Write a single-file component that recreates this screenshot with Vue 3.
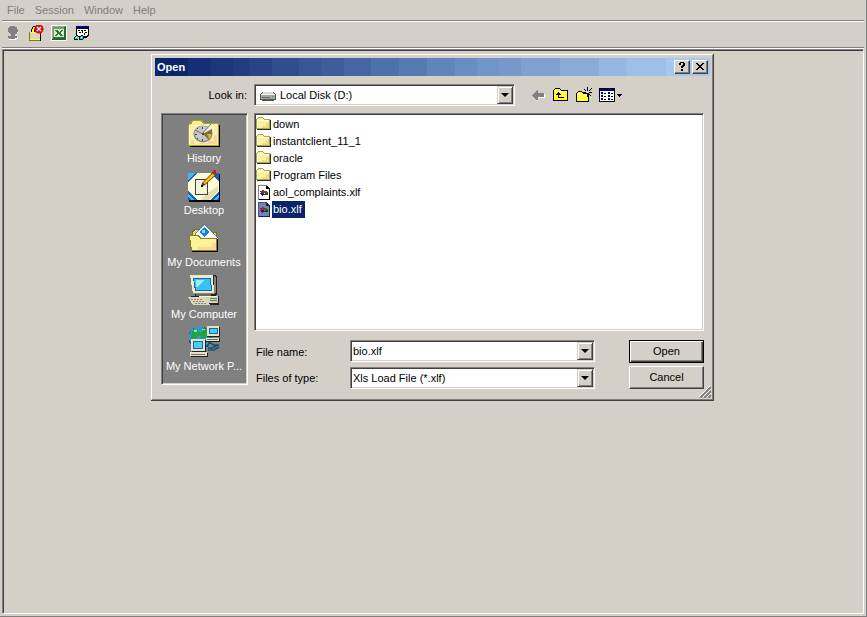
<script setup>
import { ref } from 'vue'

const menus = ['File', 'Session', 'Window', 'Help']
const places = [
  { id: 'history', label: 'History' },
  { id: 'desktop', label: 'Desktop' },
  { id: 'documents', label: 'My Documents' },
  { id: 'computer', label: 'My Computer' },
  { id: 'network', label: 'My Network P...' },
]
const files = [
  { name: 'down', kind: 'folder' },
  { name: 'instantclient_11_1', kind: 'folder' },
  { name: 'oracle', kind: 'folder' },
  { name: 'Program Files', kind: 'folder' },
  { name: 'aol_complaints.xlf', kind: 'file' },
  { name: 'bio.xlf', kind: 'file' },
]
const fileName = ref('bio.xlf')
const selected = ref('bio.xlf')

function pick(file) {
  selected.value = file.name
  if (file.kind === 'file') fileName.value = file.name
}
</script>

<template>
  <div class="app">
    <nav class="menubar" aria-label="Main menu">
      <button v-for="m in menus" :key="m" type="button" disabled>{{ m }}</button>
    </nav>

    <div class="toolbar" role="toolbar" aria-label="Main toolbar">
      <button type="button" aria-label="User" disabled>
        <svg width="16" height="16" viewBox="0 0 16 16" shape-rendering="crispEdges">
          <path fill="#fff" d="M10 2h2v1h1v5h-1v2h-1v2h2v2h-2v1H4v-1h6v-3h1z" />
          <path fill="#808080" d="M5 1h5v1h2v2h1v3h-1v2h-2v2h2v2h-2v1H4v-1H3v-2h3V9H5V8H4V7H3V3h1V2h1z" />
        </svg>
      </button>
      <button type="button" aria-label="Disconnect">
        <svg width="16" height="16" viewBox="0 0 16 16" shape-rendering="crispEdges">
          <path fill="#000" d="M4 2h1V1h4v1H5v2H4v3H3V4h1zM6 4h1v3H6z" />
          <path fill="#ffff00" d="M5 2h3v1H6v4H4V4h1z" />
          <path fill="#808000" d="M1 7h1v9H1zM2 15h10v1H2z" />
          <path fill="#000" d="M12 8h1v8h-1z" />
          <path fill="#ffff40" d="M2 7h10v1H2zM2 14h10v1H2z" />
          <path fill="#d8d4c0" d="M2 8h10v6H2z" />
          <circle cx="11" cy="4" r="4.600" fill="#e00810" shape-rendering="auto" />
          <path d="M9 2l4 4M13 2L9 6" stroke="#fff" stroke-width="1.400" shape-rendering="auto" />
        </svg>
      </button>
      <button type="button" aria-label="Excel">
        <svg width="16" height="16" viewBox="0 0 16 16" shape-rendering="crispEdges">
          <path fill="#fff" d="M0 0h16v16H0z" />
          <path fill="#8db18a" d="M1 1h13v13H1z" />
          <path fill="#1f5f22" d="M14 1h1v14H1v-1h13z" />
          <path fill="#6c9f6b" d="M2 2h12v12H2z" />
          <path fill="#2b702e" d="M2 12h12v2H2zM13 2h1v12h-1z" />
          <path fill="#dbe9d6" d="M3 4h10v8H3z" />
          <path fill="#2c7c33" d="M4 5h3v1h1v1h1V6h1V5h2v1h-1v1h-1v2h1v1h1v1H9v-1H8V9H7v1H6v1H4v-1h1V9h1V7H5V6H4z" />
        </svg>
      </button>
      <button type="button" aria-label="Find records">
        <svg width="16" height="16" viewBox="0 0 16 16" shape-rendering="crispEdges">
          <path fill="#000" d="M2 1h13v10h-1v1h-1v1H5v-1H2z" />
          <path fill="#fff" d="M3 4h11v6h-1v1H3z" />
          <path fill="#000080" d="M2 1h13v2H2z" />
          <path fill="#000" d="M4 5h2v1H4zM7 5h2v1H7zM10 5h2v1h-2zM5 7h2v1H5zM8 6h1v2H8zM11 7h2v1h-2zM10 8h1v2h-1zM2 10h2v1H2zM7 10h2v1H7zM1 11h1v2H1zM0 12h1v3H0zM1 14h3v1H1zM4 11h2v1H4zM5 12h1v3H5zM6 14h3v1H6zM9 11h1v3H9z" />
          <path fill="#00dfe8" d="M1 12h3v2H1zM6 12h3v2H6zM2 11h2v1H2zM7 11h2v1H7z" />
          <path fill="#fff" d="M2 12h1v1H2zM7 12h1v1H7z" />
        </svg>
      </button>
    </div>

    <main class="workspace">
      <section class="dialog" role="dialog" aria-labelledby="dlg-title">
        <header class="titlebar">
          <h1 id="dlg-title">Open</h1>
          <button type="button" aria-label="Help">
            <svg width="12" height="10" viewBox="0 0 12 10" shape-rendering="crispEdges">
              <path d="M3 1h1V0h4v1h1v3H8v1H7v1H5V4h1V3h1V1H5v2H3zM5 7h2v2H5z" />
            </svg>
          </button>
          <button type="button" aria-label="Close">
            <svg width="12" height="10" viewBox="0 0 12 10" shape-rendering="crispEdges">
              <path d="M2 1h2v1h1v1h2V2h1V1h2v1H9v1H8v1H7v1h1v1h1v1h1v1H8V7H7V6H5v1H4v1H2V7h1V6h1V5h1V4H4V3H3V2H2z" />
            </svg>
          </button>
        </header>

        <form class="body" @submit.prevent>
          <label class="lookin-label" for="look-in">Look in:</label>
          <div class="lookin-row">
            <div class="combo lookin">
              <svg class="lead" width="16" height="16" viewBox="0 0 16 16" shape-rendering="crispEdges">
                <path fill="#555" d="M2 5h12v1h1v1h1v6h-2v1H2v-1H0V7h1V6h1z" />
                <path fill="#d8d8d8" d="M3 5h10v1h1v1H2V6h1z" />
                <path fill="#a4a4a4" d="M1 7h14v5H1z" />
                <path fill="#eee" d="M1 7h14v1H1z" />
                <path fill="#6b6b6b" d="M2 10h8v1H2z" />
                <path fill="#35c43a" d="M12 9h2v1h-2z" />
              </svg>
              <select id="look-in"><option>Local Disk (D:)</option></select>
              <span class="drop" aria-hidden="true"><i></i></span>
            </div>
            <div class="navtools">
              <button type="button" aria-label="Back" disabled>
                <svg width="16" height="16" viewBox="0 0 16 16" shape-rendering="crispEdges">
                  <path fill="#fff" d="M7 4h1v3h7v4H8v3H7v-1z" />
                  <path fill="#808080" d="M2 8h1V7h1V6h1V5h1V4h1v-1h1v3h6v4H8v3H6v-1H5v-1H4v-1H3V9H2z" />
                </svg>
              </button>
              <button type="button" aria-label="Up one level">
                <svg width="16" height="16" viewBox="0 0 16 16" shape-rendering="crispEdges">
                  <path fill="#000" d="M2 1h5v1h1v1h7v11H0V3h1V2h1z" />
                  <path fill="#ffff31" d="M2 2h5v1h1v1h6v9H1V3h1z" />
                  <path fill="#ffffb0" d="M1 4h13v1H1z" />
                  <path fill="#000" d="M5 5h1v1h1v1h1v1H6v2h5v1H5V8H3V7h1V6h1z" />
                </svg>
              </button>
              <button type="button" aria-label="New folder">
                <svg width="16" height="16" viewBox="0 0 16 16" shape-rendering="crispEdges">
                  <path fill="#000" d="M2 4h4v1h1v1h6v9H0V6h1V5h1z" />
                  <path fill="#ffff31" d="M2 5h4v1h1v1h5v7H1V6h1z" />
                  <path fill="#ffffb0" d="M1 7h11v1H1z" />
                  <path fill="#000" d="M11 0h1v4h-1zM11 7h1v3h-1zM13 5h3v1h-3zM7 5h3v1H7zM8 2h1v1H8zM9 3h1v1H9zM14 2h1v1h-1zM13 3h1v1h-1zM15 1h1v1h-1zM13 7h1v1h-1zM14 8h1v1h-1z" />
                  <path fill="#fff" d="M11 5h1v1h-1z" />
                </svg>
              </button>
              <button type="button" aria-label="Views">
                <svg width="23" height="16" viewBox="0 0 23 16" shape-rendering="crispEdges">
                  <path fill="#000" d="M0 1h16v14H0z" />
                  <path fill="#000080" d="M1 2h14v2H1z" />
                  <path fill="#fff" d="M1 4h14v10H1z" />
                  <path fill="#000080" d="M2 5h2v2H2zM2 8h2v2H2zM2 11h2v2H2zM9 5h2v2H9zM9 8h2v2H9zM9 11h2v2H9z" />
                  <path fill="#000" d="M5 6h2v1H5zM5 9h2v1H5zM5 12h2v1H5zM12 6h2v1h-2zM12 9h2v1h-2zM12 12h2v1h-2zM18 7h5v1h-1v1h-1v1h-1V9h-1V8h-1z" />
                </svg>
              </button>
            </div>
          </div>

          <nav class="places" aria-label="Places">
            <button v-for="p in places" :key="p.id" type="button">
              <svg v-if="p.id === 'history'" width="32" height="32" viewBox="0 0 32 32" shape-rendering="crispEdges">
                <path fill="#000" d="M2 7h30v22H2z" />
                <path fill="#a8a230" d="M0 7h1V5h2V3l1-1h10l2 3h15v22l-1 1H0z" />
                <path fill="#f6f28e" d="M1 7h1V6h2V4l1-1h8l2 3h15v21H1z" />
                <path fill="#fbf0b4" d="M2 9h27v17H2z" />
                <path fill="#fbd2a0" d="M20 23h9v3H12v-1h8zM26 17h3v6h-3zM3 22h3v4H3z" />
                <path fill="#fffde0" d="M1 7h28v1H1zM1 8h1v18H1z" />
                <g shape-rendering="auto">
                  <ellipse cx="15" cy="16" rx="9.500" ry="8.500" fill="#848484" />
                  <ellipse cx="15" cy="15.500" rx="8.500" ry="7.500" fill="#c6c6c6" />
                  <path fill="#8a6a28" d="M15 16l9-6v7l-3 5z" />
                  <path fill="#d6a850" d="M19 16h5l-1 3-2 2z" />
                  <path fill="#f0f0f0" d="M14 16L23 6l1 5z" />
                  <path stroke="#707070" d="M14 16L23 6M15 16L7 12" fill="none" />
                </g>
                <path fill="#444" d="M14 9h1v2h-1zM14 21h1v2h-1zM7 16h2v1H7zM9 20h1v1H9zM9 10h1v1H9zM14 15h2v2h-2z" />
              </svg>
              <svg v-else-if="p.id === 'desktop'" width="32" height="32" viewBox="0 0 32 32" shape-rendering="crispEdges">
                <path fill="#000" d="M1 4h31v28H1z" />
                <path fill="#1464b8" d="M0 3h31v27H0z" />
                <path fill="#4cb4f4" d="M0 3h7L0 10zM0 24l6 6H3l-3-3zM31 24l-6 6h3l3-3z" />
                <path fill="#fdfbd4" d="M9 3h14l8 9v9l-8 9H9l-9-9v-9z" />
                <path fill="#e4e0b0" d="M21 22l9-6v5l-8 9H12z" />
                <path fill="#404040" d="M7 9h13v16H7z" />
                <path fill="#f4f3dc" d="M8 10h11v14H8z" />
                <g shape-rendering="auto">
                  <path fill="#5a3c00" d="M13 17l1-4L25 2l3 3-11 10z" />
                  <path fill="#ffc21c" d="M15 13L25 3l2 2-10 9z" />
                  <path fill="#ce1820" d="M24 3l2-3h2v3l-2 2z" />
                </g>
                <path fill="#000" d="M13 15h2v2h-2z" />
              </svg>
              <svg v-else-if="p.id === 'documents'" width="32" height="32" viewBox="0 0 32 32" shape-rendering="crispEdges">
                <path fill="#78701c" d="M4 10l2-3h7l2 3h14v20H4z" />
                <path fill="#e8df70" d="M5 10l2-2h5l2 3h14v9H5z" />
                <path fill="#567c9c" d="M7 12l9-10 15 14-2 3H7z" />
                <path fill="#fff" d="M8 12l8-9 14 13-2 2H8z" />
                <path fill="#1c83d2" d="M11 10l5-5 5 5-5 5z" />
                <path fill="#8cdbfa" d="M14 8h3v3h-3z" />
                <path fill="#000" d="M4 28h25V17h1v13H4z" />
                <path fill="#8b821c" d="M1 13h10l2 3h16v13H3z" />
                <path fill="#fbf29a" d="M2 14h8l2 3h16v11H4z" />
                <path fill="#fcd794" d="M10 25h14v-4h4v7H10z" />
              </svg>
              <svg v-else-if="p.id === 'computer'" width="32" height="32" viewBox="0 0 32 32" shape-rendering="crispEdges">
                <path fill="#222" d="M5 1h22l2 2v17l-3 3H7z" />
                <path fill="#efe9cc" d="M2 1h23l1 19H5z" />
                <path fill="#8b8778" d="M26 2l2 2v14l-2 2zM5 19h21v1H5z" />
                <path fill="#116bb4" d="M5 4h18l1 13H7z" />
                <path fill="#35c4f4" d="M6 5h16l1 11H8z" />
                <path fill="#a0ecff" d="M8 6h8l-7 7H8z" />
                <path fill="#6e6a60" d="M8 20h15v2H8z" />
                <path fill="#222" d="M2 24l1-2h28v9H19z" />
                <path fill="#d8d2b8" d="M11 22h19v7H11z" />
                <path fill="#f3efd8" d="M11 22h18v1H11z" />
                <path fill="#77745f" d="M22 24h7v1h-7zM22 26h7v1h-7z" />
                <path fill="#dcd6bd" d="M0 23h17l5 8H5z" />
                <path fill="#8a866c" d="M3 25h2v1H3zM6 25h2v1H6zM9 25h2v1H9zM12 25h2v1h-2zM5 27h2v1H5zM8 27h2v1H8zM11 27h2v1h-2zM14 27h2v1h-2zM7 29h2v1H7zM10 29h2v1h-2zM13 29h2v1h-2zM16 29h2v1h-2z" />
              </svg>
              <svg v-else width="32" height="32" viewBox="0 0 32 32" shape-rendering="crispEdges">
                <circle cx="12" cy="12" r="11.500" fill="#0a5a8e" />
                <circle cx="11.500" cy="11" r="10.500" fill="#2c9ade" />
                <path fill="#23a33c" d="M5 4h4l3 3-2 4-4 3v5l-3-3V8zM14 1l6 3-1 5-4 4 2 5-3 4-3-6 2-5-2-3 4-3z" />
                <path fill="#9be59a" d="M6 4h3v2H6zM14 3h3v1h-3z" />
                <path fill="#222" d="M19 1h13v10H19zM18 12h14v4H18z" />
                <path fill="#e7e1c7" d="M19 0h12v10H19zM18 12h13v3H18z" />
                <path fill="#116bb4" d="M21 2h9v6h-9z" />
                <path fill="#4acbf5" d="M22 3h7v4h-7z" />
                <path fill="#222" d="M4 14h14v12H4zM3 27h17v4H3z" />
                <path fill="#e7e1c7" d="M3 13h14v12H3zM2 26h17v4H2z" />
                <path fill="#116bb4" d="M5 15h10v8H5z" />
                <path fill="#4acbf5" d="M6 16h8v6H6z" />
                <path fill="#77745f" d="M3 28h14v1H3zM19 13h11v1H19z" />
                <path fill="none" stroke="#0b527c" stroke-width="1.500" shape-rendering="auto" d="M20 22h4l6-3M20 24h6l5-3M22 17l4 2h5" />
              </svg>
              <span>{{ p.label }}</span>
            </button>
          </nav>

          <div class="main">
            <ul class="files" role="listbox" aria-label="Files">
              <li
                v-for="f in files"
                :key="f.name"
                role="option"
                :aria-selected="f.name === selected"
                :class="{ selected: f.name === selected }"
                @click="pick(f)"
              >
                <svg v-if="f.kind === 'folder'" width="16" height="16" viewBox="0 0 16 16" shape-rendering="crispEdges">
                  <path fill="#303018" d="M2 3h13v10H1v-1h1z" />
                  <path fill="#a8a650" d="M0 2h1V1h1V0h5v1h1v1h6v10H0z" />
                  <path fill="#f9f2a4" d="M1 2h1V1h5v1h1v1h5v8H1z" />
                  <path fill="#fffcd8" d="M1 3h12v1H1zM1 3h1v7H1z" />
                  <path fill="#eedc84" d="M6 9h4V6h3v5H6z" />
                </svg>
                <svg v-else width="16" height="16" viewBox="0 0 16 16" shape-rendering="crispEdges">
                  <path class="edge" d="M2 0h9v1h1v1h1v1h1v12H2z" />
                  <path class="sheet" d="M3 1h7v3h3v10H3z" />
                  <path class="outline" d="M2 0h9v1H2zM2 0h1v15H2z" />
                  <path fill="#c01818" d="M6 5h2v1h1v2H5V6h1z" />
                  <path fill="#188418" d="M9 6h2v1h1v1H9z" />
                  <path fill="#1818c0" d="M5 8h3v1h1v1H7v1H6v-1H5z" />
                  <path fill="#2c3c20" d="M9 8h3v2H9zM4 6h1v1H4zM4 8h1v1H4z" />
                </svg>
                <span>{{ f.name }}</span>
              </li>
            </ul>

            <div class="fields">
              <label for="file-name">File name:</label>
              <div class="combo name">
                <input id="file-name" v-model="fileName" type="text" />
                <button class="drop" type="button" aria-label="Recent names"><i></i></button>
              </div>
              <button class="push default" type="submit">Open</button>

              <label for="file-type">Files of type:</label>
              <div class="combo type">
                <select id="file-type"><option>Xls Load File (*.xlf)</option></select>
                <span class="drop" aria-hidden="true"><i></i></span>
              </div>
              <button class="push" type="button">Cancel</button>
            </div>
          </div>
        </form>

        <svg class="grip" width="12" height="12" viewBox="0 0 12 12">
          <path d="M1 12L12 1M5 12l7-7M9 12l3-3" stroke="#808080" stroke-width="2" />
          <path d="M0 11L11 0M4 11l8-8M8 11l4-4" stroke="#fff" />
        </svg>
      </section>
    </main>
  </div>
</template>

<style>
body {
  background: #d4d0c8;
}
</style>

<style scoped>
.app {
  box-sizing: border-box;
  min-height: 100vh;
  display: flex;
  flex-direction: column;
  padding: 0 2px 2px;
  border-right: 1px solid #808080;
  border-bottom: 1px solid #808080;
  background: #d4d0c8;
  color: #000;
  font: 11px/13px "Liberation Sans", Arial, sans-serif;
}

.app * {
  box-sizing: border-box;
}

button,
input,
select {
  margin: 0;
  padding: 0;
  border: 0;
  border-radius: 0;
  outline: 0;
  background: transparent;
  color: inherit;
  font: inherit;
  appearance: none;
}

svg {
  display: block;
  flex: none;
}

.menubar {
  display: flex;
  align-items: center;
  gap: 10px;
  height: 20px;
  padding: 0 5px;
}

.menubar button {
  color: #808080;
}

.toolbar {
  display: flex;
  align-items: center;
  gap: 7px;
  height: 28px;
  padding: 0 3px 2px;
  border-top: 1px solid #808080;
  border-bottom: 1px solid #808080;
  box-shadow: inset 0 1px #fff, 0 1px #fff;
}

.workspace {
  flex: 1;
  position: relative;
  margin-top: 1px;
  border: 1px solid;
  border-color: #808080 #fff #fff #808080;
  box-shadow: inset 1px 1px #404040;
}

.dialog {
  position: absolute;
  left: 148px;
  top: 4px;
  width: 563px;
  padding: 3px 2px 2px 3px;
  border: solid;
  border-width: 1px 2px 2px 1px;
  border-color: #fff #808080 #808080 #fff;
  box-shadow: -1px -1px #d4d0c8;
  background: #d4d0c8;
}

.dialog::after {
  content: "";
  position: absolute;
  inset: -1px -2px -2px -1px;
  border-right: 1px solid #404040;
  border-bottom: 1px solid #404040;
  pointer-events: none;
}

.titlebar {
  display: flex;
  align-items: center;
  gap: 2px;
  height: 18px;
  padding: 0 2px;
  background: linear-gradient(
    to right,
    #0c266c 0 6%,
    #142f75 6% 10%,
    #1a377b 10% 14%,
    #203d81 14% 17%,
    #264487 17% 21%,
    #2e4e8e 21% 26%,
    #365795 26% 30%,
    #3c5e9b 30% 34%,
    #4466a2 34% 39%,
    #4d71ab 39% 44%,
    #567bb2 44% 49%,
    #5f85ba 49% 54%,
    #688ec2 54% 58%,
    #7096c8 58% 62%,
    #7799ca 62% 66%,
    #7fa1d0 66% 73%,
    #8aacd9 73% 80%,
    #94b8e1 80% 85%,
    #9bbfe7 85% 92%,
    #a4c8ee 92%
  );
}

.titlebar h1 {
  flex: 1;
  margin: 0;
  color: #fff;
  font-size: 11px;
  font-weight: bold;
}

.titlebar button {
  display: grid;
  place-items: center;
  width: 16px;
  height: 14px;
  background: #d4d0c8;
  border: 1px solid;
  border-color: #fff #404040 #404040 #fff;
  box-shadow: inset -1px -1px #808080;
}

.body {
  display: grid;
  grid-template-columns: 87px 1fr;
  column-gap: 6px;
  row-gap: 7px;
  padding: 8px 6px;
}

.lookin-label {
  align-self: center;
  padding-right: 1px;
  text-align: right;
}

.lookin-row,
.navtools {
  display: flex;
  align-items: center;
}

.lookin-row {
  gap: 15px;
}

.navtools {
  gap: 7px;
}

.combo {
  display: grid;
  grid-template-columns: auto 1fr 16px;
  align-items: center;
  height: 22px;
  padding: 1px;
  background: #fff;
  border: 1px solid;
  border-color: #808080 #fff #fff #808080;
  box-shadow: inset 1px 1px #404040, inset -1px -1px #d4d0c8;
}

.combo input,
.combo select {
  grid-row: 1;
  grid-column: 1 / 4;
  width: 100%;
  height: 18px;
  padding-left: 1px;
}

.lookin {
  width: 261px;
}

.lookin .lead {
  grid-row: 1;
  grid-column: 1;
  margin-left: 4px;
  pointer-events: none;
}

.lookin select {
  padding-left: 24px;
}

.drop {
  grid-row: 1;
  grid-column: 3;
  display: grid;
  place-items: center;
  height: 18px;
  background: #d4d0c8;
  border: 1px solid;
  border-color: #d4d0c8 #404040 #404040 #d4d0c8;
  box-shadow: inset 1px 1px #fff, inset -1px -1px #808080;
  pointer-events: none;
}

.drop i {
  border: 4px solid transparent;
  border-top-color: #000;
  border-bottom-width: 0;
}

.places {
  align-self: start;
  display: flex;
  flex-direction: column;
  height: 272px;
  padding: 4px 1px 0 0;
  background: #808080;
  border: 1px solid;
  border-color: #808080 #fff #fff #808080;
  box-shadow: inset 1px 1px #404040, inset -1px -1px #d4d0c8;
}

.places button {
  display: flex;
  flex-direction: column;
  align-items: center;
  gap: 2px;
  height: 52px;
  color: #fff;
  white-space: nowrap;
}

.main {
  display: flex;
  flex-direction: column;
  gap: 9px;
}

.files {
  height: 218px;
  margin: 0;
  padding: 2px 1px;
  list-style: none;
  background: #fff;
  border: 1px solid;
  border-color: #808080 #fff #fff #808080;
  box-shadow: inset 1px 1px #404040, inset -1px -1px #d4d0c8;
}

.files li {
  display: flex;
  align-items: center;
  height: 17px;
}

.files span {
  padding: 2px 3px 2px 1px;
}

.files .selected span {
  background: #0a246a;
  color: #fff;
}

.edge {
  fill: #000;
}

.sheet {
  fill: #fff;
}

.outline {
  fill: #808080;
}

.selected .sheet {
  fill: #7484ad;
}

.selected .edge {
  fill: #0a246a;
}

.selected .outline {
  fill: #40558c;
}

.fields {
  display: grid;
  grid-template-columns: 96px 245px 1fr 75px;
  grid-auto-rows: 23px;
  row-gap: 3px;
  align-items: center;
}

.fields label {
  padding: 2px 0 0 2px;
}

.name {
  align-self: start;
}

.type {
  align-self: end;
}

.push {
  grid-column: 4;
  height: 23px;
  background: #d4d0c8;
  border: 1px solid;
  border-color: #fff #404040 #404040 #fff;
  box-shadow: inset -1px -1px #808080;
}

.push.default {
  border-color: #000;
  box-shadow: inset 1px 1px #fff, inset -1px -1px #404040, inset -2px -2px #808080;
}

.grip {
  position: absolute;
  right: 1px;
  bottom: 1px;
}
</style>
